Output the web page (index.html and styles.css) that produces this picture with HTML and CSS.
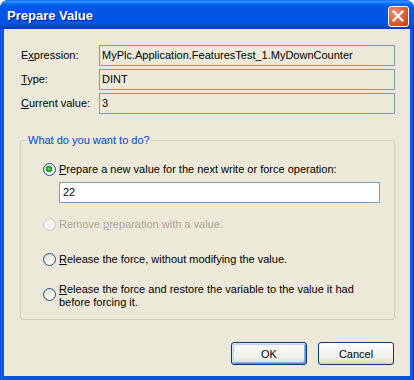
FILE: index.html
```html
<!DOCTYPE html>
<html>
<head>
<meta charset="utf-8">
<link rel="stylesheet" href="styles.css">
</head>
<body>
<div class="window">
  <div class="titlebar">
    <span class="title">Prepare Value</span>
    <button class="close" aria-label="Close">
      <svg width="19" height="19" viewBox="0 0 19 19"><path d="M4.5 4.5 L13.5 13.5 M13.5 4.5 L4.5 13.5" stroke="#fff" stroke-width="2.2" stroke-linecap="square" fill="none"/></svg>
    </button>
  </div>
  <div class="client">
    <div class="info">
      <span class="lbl">E<u>x</u>pression:</span><div class="field">MyPlc.Application.FeaturesTest_1.MyDownCounter</div>
      <span class="lbl"><u>T</u>ype:</span><div class="field">DINT</div>
      <span class="lbl"><u>C</u>urrent value:</span><div class="field">3</div>
    </div>
    <div class="group">
      <span class="legend">What do you want to do?</span>
      <div class="opt opt1"><span class="radio checked"></span><span><u>P</u>repare a new value for the next write or force operation:</span></div>
      <div class="input">22</div>
      <div class="opt opt2 disabled"><span class="radio"></span><span>Remove <u>p</u>reparation with a value.</span></div>
      <div class="opt opt3"><span class="radio"></span><span><u>R</u>elease the force, without modifying the value.</span></div>
      <div class="opt opt4"><span class="radio"></span><span><u>R</u>elease the force and restore the variable to the value it had<br>before forcing it.</span></div>
    </div>
    <div class="buttons">
      <button class="btn default">OK</button>
      <button class="btn">Cancel</button>
    </div>
  </div>
</div>
</body>
</html>
```
FILE: styles.css
```css
html, body {
  margin: 0;
  padding: 0;
  background: #ffffff;
}
body {
  font-family: "Liberation Sans", Arial, sans-serif;
  font-size: 11px;
  color: #000;
}
.window {
  width: 414px;
  height: 380px;
  box-sizing: border-box;
  display: flex;
  flex-direction: column;
  background: linear-gradient(to right, #0831D9 0, #166AEE 1px, #0855DD 3px, #0855DD calc(100% - 3px), #166AEE calc(100% - 2px), #0831D9 calc(100% - 1px));
  border-radius: 8px 8px 0 0;
  overflow: hidden;
}
.titlebar {
  height: 29px;
  flex: none;
  display: flex;
  align-items: center;
  justify-content: space-between;
  padding: 0 5px 0 7px;
  background: linear-gradient(to bottom, #0058EE 0, #3A93FF 1px, #288EFF 2px, #127DFF 3px, #036FFC 4px, #0262EE 5px, #0057E5 7px, #0054E3 50%, #0055EB 80%, #0048DC 90%, #003DD7 96%, #0036CB 100%);
  border-radius: 8px 8px 0 0;
}
.title {
  color: #fff;
  font-weight: bold;
  font-size: 13px;
  text-shadow: 1px 1px 0 #0A1883;
  margin-top: 1px;
}
.close {
  width: 21px;
  height: 21px;
  padding: 0;
  box-sizing: border-box;
  border: 1px solid #fff;
  border-radius: 3px;
  background: radial-gradient(circle at 30% 30%, #F0916D 0, #E26A43 40%, #CC4A20 80%, #B8391A 100%);
  display: flex;
  margin-top: 3px;
}
.close svg { display: block; }
.client {
  flex: 1;
  margin: 0 4px 4px;
  background: #ECE9D8;
  padding: 16px 15px 11px 16px;
  display: flex;
  flex-direction: column;
}
.info {
  display: grid;
  grid-template-columns: 79px 1fr;
  grid-auto-rows: 21px;
  row-gap: 3px;
  align-items: center;
}
.lbl {
  padding-left: 1px;
  line-height: 13px;
}
.field {
  height: 21px;
  box-sizing: border-box;
  border: 1px solid #7F9DB9;
  padding: 0 2px;
  line-height: 19px;
  white-space: nowrap;
  overflow: hidden;
}
.group {
  position: relative;
  margin-top: 26px;
  border: 1px solid #D0D0BF;
  border-radius: 3px;
  padding: 22px 0 10px 22px;
  display: flex;
  flex-direction: column;
  align-items: flex-start;
}
.legend {
  position: absolute;
  top: -7px;
  left: 6px;
  padding: 0 1px;
  line-height: 13px;
  background: #ECE9D8;
  color: #0046D5;
}
.opt {
  display: flex;
  align-items: flex-start;
  line-height: 13px;
}
.radio {
  flex: none;
  width: 13px;
  height: 13px;
  box-sizing: border-box;
  border: 1px solid #1C5180;
  border-radius: 50%;
  margin-right: 3px;
  background: linear-gradient(135deg, #DCDBD5 0, #F3F3EF 50%, #FFFFFF 100%);
}
.radio.checked {
  background:
    radial-gradient(circle at 45% 45%, #8AE88A 0, #3BC03A 1.2px, #21A121 2.4px, #1A861A 3px, transparent 3.4px),
    linear-gradient(135deg, #DCDBD5 0, #F3F3EF 50%, #FFFFFF 100%);
}
.opt2 { margin-top: 15px; }
.opt3 { margin-top: 22px; }
.opt4 { margin-top: 17px; }
.opt4 .radio { margin-top: 5px; }
.disabled { color: #ACA899; }
.disabled .radio {
  border-color: #CAC8BB;
  background: #F4F3EE;
}
.input {
  margin-top: 6px;
  margin-left: 16px;
  width: 321px;
  height: 21px;
  box-sizing: border-box;
  border: 1px solid #7F9DB9;
  background: #fff;
  padding: 0 3px;
  line-height: 19px;
}
.buttons {
  margin-top: 22px;
  margin-right: 1px;
  display: flex;
  justify-content: flex-end;
  gap: 11px;
}
.btn {
  width: 76px;
  height: 23px;
  box-sizing: border-box;
  border: 1px solid #003C74;
  border-radius: 3px;
  background: linear-gradient(to bottom, #FFFFFF 0, #F8F8F5 30%, #F0F0EA 70%, #E3E1D8 90%, #D6D0C5 100%);
  font-family: "Liberation Sans", Arial, sans-serif;
  font-size: 11px;
  color: #000;
  padding: 0;
}
.btn.default {
  box-shadow: inset 1px 1px 0 #CEE7FF, inset -1px -1px 0 #6982EE, inset 2px 2px 0 #BCD4F6, inset -2px -2px 0 #89ADE4;
}
```
